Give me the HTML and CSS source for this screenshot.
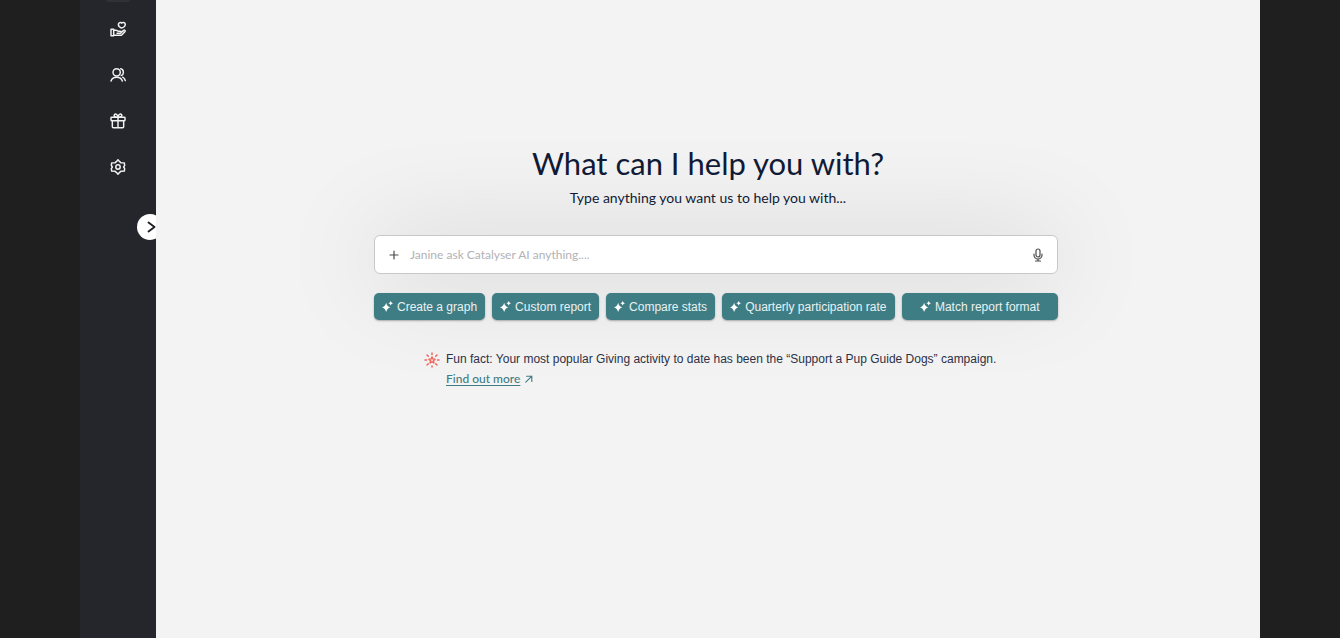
FILE: index.html
```html
<!DOCTYPE html>
<html lang="en">
<head>
    <meta charset="UTF-8">
    <meta name="viewport" content="width=device-width, initial-scale=1.0">
    <title>Catalyser AI</title>
    <link rel="stylesheet" href="styles.css">
</head>
<body>
    <svg width="0" height="0" class="sprite" aria-hidden="true">
        <symbol id="sparkle" viewBox="0 0 24 24">
            <path d="M9 4 Q10.800 12.200 18 14 Q10.800 15.800 9 24 Q7.200 15.800 0 14 Q7.200 12.200 9 4Z"/>
            <path d="M19 0 Q19.900 4.100 24 5 Q19.900 5.900 19 10 Q18.100 5.900 14 5 Q18.100 4.100 19 0Z"/>
        </symbol>
    </svg>

    <div class="app">
        <aside class="sidebar">
            <nav class="menu">
                <span class="menu-active"></span>
                <a href="#" aria-label="Giving">
                    <svg viewBox="0 0 24 24">
                        <path d="M1.500 12.500h4v9.500h-4z"/>
                        <path d="M5.500 14h3.500c2 0 2.500 1.500 4.500 1.500h2c2.200 0 2.200 3 0 3h-5M16.500 17.500l4-3.500c1.500-1 3 .6 1.800 2L18 20.500c-.8.8-1.500 1-2.500 1h-10"/>
                        <path d="M17 10.500c-3.500-1.500-5-4-4-6.700 1-2 3.800-2.300 4.700-.6 1.200-1.700 4.300-1.500 5 .8.600 2.800-2 5.500-5.700 6.500z"/>
                    </svg>
                </a>
                <a href="#" aria-label="People">
                    <svg viewBox="0 0 24 24">
                        <circle cx="10" cy="8" r="5.500"/>
                        <path d="M1.500 21c1.500-4 4.500-5.500 8.500-5.500s7 1.500 8.500 5.500M16 2.700c5 .8 5.500 8.500.8 10.200M19 15.300c2 .9 3.200 2.700 4 5"/>
                    </svg>
                </a>
                <a href="#" aria-label="Rewards">
                    <svg viewBox="0 0 24 24">
                        <rect x="1.500" y="6.500" width="21" height="5" rx="1"/>
                        <path d="M3.500 11.500v9c0 1 .5 1.500 1.500 1.500h14c1 0 1.500-.5 1.500-1.500v-9M12 6.500V22M12 6.500C8 6.500 5.500 5 6.500 2.800 8 .3 12 2 12 6.500zM12 6.500c4 0 6.500-1.500 5.500-3.700C16 .3 12 2 12 6.500z"/>
                    </svg>
                </a>
                <a href="#" aria-label="Settings">
                    <svg viewBox="0 0 24 24">
                        <path d="M9.500 4 12 1.300 14.500 4l1.700 1.500 5.300.3.500 3.700-1.500 2.500 1.500 2.500-.5 3.700-5.300.3-1.700 1.500-2.500 2.700L9.500 20l-1.700-1.500-5.300-.3-.5-3.700L3.500 12 2 9.500l.5-3.700 5.300-.3z"/>
                        <circle cx="12" cy="12" r="3.300"/>
                    </svg>
                </a>
            </nav>
            <button class="expand" type="button" aria-label="Expand sidebar">
                <svg viewBox="0 0 12 16"><path d="M2 2l8 6-8 6"/></svg>
            </button>
        </aside>

        <main class="content">
            <h1>What can I help you with?</h1>
            <p class="subtitle">Type anything you want us to help you with...</p>

            <div class="assistant">
                <form class="ask">
                    <button type="button" aria-label="Add attachment">
                        <svg viewBox="0 0 14 14"><path d="M7 3v8M3 7h8"/></svg>
                    </button>
                    <input type="text" aria-label="Ask Catalyser AI" placeholder="Janine ask Catalyser AI anything....">
                    <button type="button" aria-label="Use microphone">
                        <svg viewBox="0 0 14 14">
                            <rect x="5" y="1" width="4" height="8" rx="2"/>
                            <path d="M3 6v1a4 4 0 0 0 8 0V6M7 11v2M4.500 13h5"/>
                        </svg>
                    </button>
                </form>

                <div class="suggestions">
                    <button type="button"><svg><use href="#sparkle"/></svg>Create a graph</button>
                    <button type="button"><svg><use href="#sparkle"/></svg>Custom report</button>
                    <button type="button"><svg><use href="#sparkle"/></svg>Compare stats</button>
                    <button type="button"><svg><use href="#sparkle"/></svg>Quarterly participation rate</button>
                    <button type="button"><svg><use href="#sparkle"/></svg>Match report format</button>
                </div>

                <div class="fact">
                    <svg class="fact-icon" viewBox="0 0 16 16">
                        <path d="M8 5l.9 2 2.200.2-1.700 1.500.5 2.200L8 9.800l-1.900 1.100.5-2.200-1.700-1.500L7.100 7z"/>
                        <path d="M8 1v1.500M8 14v1M1 8h1.500M13.500 8H15M3 3l1.300 1.300M13 3l-1.300 1.300M3 13l1.300-1.300M13 13l-1.300-1.300"/>
                    </svg>
                    <div>
                        <p>Fun fact: Your most popular Giving activity to date has been the “Support a Pup Guide Dogs” campaign.</p>
                        <a href="#"><span>Find out more</span><svg viewBox="0 0 10 10"><path d="M1 9l7.500-7.500M2 1.500h6.500V8"/></svg></a>
                    </div>
                </div>
            </div>
        </main>
    </div>
</body>
</html>
```
FILE: styles.css
```css
/* Page */
* {
    box-sizing: border-box;
}

body {
    margin: 0;
    padding: 0 80px;
    background: #1f1f1f;
    font-family: "Liberation Sans", Arial, sans-serif;
    color: #111a35;
}

svg {
    fill: none;
    stroke: currentColor;
    stroke-linecap: round;
    stroke-linejoin: round;
}

button {
    border: none;
    cursor: pointer;
    font-family: inherit;
}

.sprite {
    position: absolute;
}

.app {
    display: flex;
    min-height: 100vh;
}

/* Sidebar */
.sidebar {
    display: flex;
    flex-direction: column;
    width: 76px;
    background: #25262b;
    overflow: hidden;
}

.menu {
    display: flex;
    flex-direction: column;
    align-items: center;
    gap: 30px;
}

.menu-active {
    width: 24px;
    height: 2px;
    margin-bottom: -11px;
    border-radius: 0 0 4px 4px;
    background: #303136;
}

.menu a {
    display: flex;
    color: #f2f2f2;
}

.menu svg {
    width: 16px;
    height: 16px;
    stroke-width: 2.2;
}

.expand {
    display: flex;
    align-items: center;
    align-self: flex-end;
    width: 26px;
    height: 26px;
    margin: 39px -7px 0 0;
    padding: 0 0 0 10px;
    border-radius: 50%;
    background: #fff;
    color: #1f2024;
}

.expand svg {
    width: 9px;
    height: 12px;
    stroke-width: 2.5;
}

/* Main content */
.content {
    display: flex;
    flex: 1;
    flex-direction: column;
    align-items: center;
    padding: 142px 24px 24px;
    background: #f3f3f3;
    overflow: hidden;
}

h1 {
    position: relative;
    z-index: 1;
    margin: 0;
    font: 400 31px/42px Lato, sans-serif;
}

.subtitle {
    position: relative;
    z-index: 1;
    margin: 4px 0 27px;
    font: 400 14px/20px Lato, sans-serif;
}

.assistant {
    display: flex;
    flex-direction: column;
    align-items: center;
    width: 100%;
    max-width: 700px;
    padding-left: 16px;
}

.ask {
    display: flex;
    align-items: center;
    width: 100%;
    height: 39px;
    padding: 0 12px;
    border: 1px solid #cbc6c6;
    border-radius: 6px;
    background: #fff;
    box-shadow: 0 4px 100px rgba(0, 0, 0, 0.17);
}

.ask button {
    display: flex;
    padding: 0;
    background: none;
    color: #4b4b50;
}

.ask svg {
    width: 14px;
    height: 14px;
    stroke-width: 1.2;
}

.ask input {
    flex: 1;
    min-width: 0;
    padding: 0 9px;
    border: none;
    outline: none;
    font: 400 12px/20px Lato, sans-serif;
    color: #111a35;
}

.ask input::placeholder {
    color: #b2b2b5;
}

/* Suggestion buttons */
.suggestions {
    display: flex;
    gap: 7px;
    width: 100%;
    margin-top: 19px;
}

.suggestions button {
    display: flex;
    align-items: center;
    justify-content: center;
    gap: 4px;
    height: 27px;
    padding: 0 8px;
    border-radius: 5px;
    background: #3f7d85;
    box-shadow: 0 1px 2px rgba(0, 0, 0, 0.3);
    color: #e8f2f2;
    font-size: 12px;
    white-space: nowrap;
}

.suggestions button:last-child {
    flex: 1;
}

.suggestions svg {
    width: 11px;
    height: 11px;
    fill: #fff;
    stroke: none;
}

/* Fun fact */
.fact {
    display: flex;
    align-self: flex-start;
    gap: 6px;
    margin-top: 29px;
    padding-left: 50px;
    font-size: 12px;
    line-height: 20px;
}

.fact p {
    margin: 0;
    color: #2b3147;
}

.fact-icon {
    flex: none;
    width: 16px;
    height: 16px;
    margin-top: 3px;
    stroke-width: 1.5;
    color: #f0655c;
}

.fact a {
    display: inline-flex;
    align-items: center;
    gap: 5px;
    color: #3f7d85;
    font-family: Lato, sans-serif;
    font-weight: 500;
    text-decoration: none;
}

.fact a span {
    text-decoration: underline;
    text-underline-offset: 2px;
}

.fact a svg {
    width: 8px;
    height: 8px;
    stroke-width: 1.4;
}
```
